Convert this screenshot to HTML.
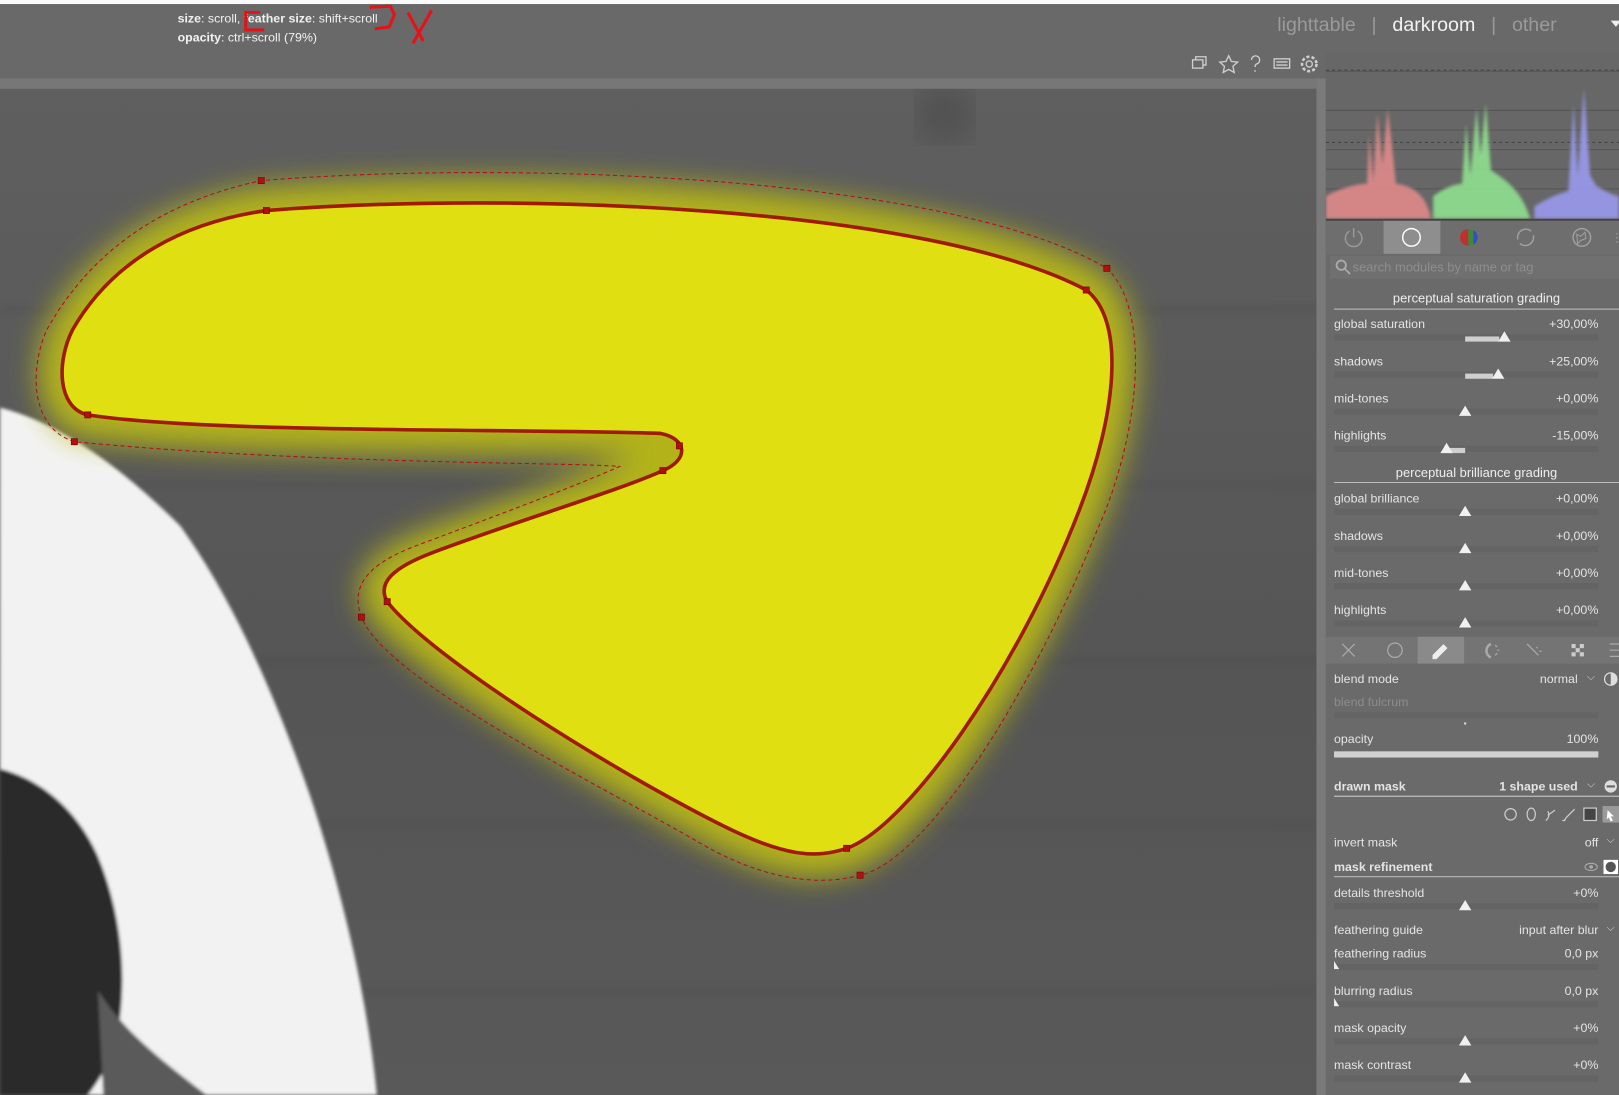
<!DOCTYPE html>
<html><head><meta charset="utf-8"><style>
html,body{margin:0;padding:0;width:1619px;height:1095px;overflow:hidden;background:#6a6a6a;}
#s{position:absolute;left:0;top:0;width:1568px;height:1061px;transform:scale(1.03253,1.03205);transform-origin:0 0;font-family:"Liberation Sans",sans-serif;color:#e2e2e2;font-size:12px;}
.a{position:absolute;}
.l{position:absolute;left:1292px;font-size:12px;color:#e4e4e4;white-space:nowrap;}
.v{position:absolute;right:20px;font-size:12px;color:#e4e4e4;white-space:nowrap;}
.tr{position:absolute;left:1292px;width:256px;height:6px;background:#646464;}
.tri{position:absolute;width:0;height:0;border-left:6px solid transparent;border-right:6px solid transparent;border-bottom:10px solid #f0f0f0;}
.fill{position:absolute;height:5px;background:#cfcfcf;}
.h{position:absolute;left:1292px;width:276px;text-align:center;font-size:12.5px;color:#eee;}
.ln{position:absolute;left:1292px;width:276px;height:1px;background:#bdbdbd;}
b{font-weight:bold}
</style></head><body><div id="s">
<div class="a" style="left:0;top:0;width:1568px;height:4px;background:#fafafa"></div>
<div class="a" style="left:0;top:4px;width:1568px;height:72px;background:#696969"></div>
<div class="a" style="left:0;top:76px;width:1275px;height:10px;background:#777"></div>
<div class="a" style="left:172px;top:9px;font-size:12px;color:#f2f2f2;line-height:18px"><b>size</b>: scroll, <b>feather size</b>: shift+scroll<br><b>opacity</b>: ctrl+scroll (79%)</div>
<svg class="a" style="left:230px;top:2px" width="200" height="44"><path d="M22 10 L8 10 L8 27 L26 27 M128 5 L148 4 L152 12 L147 24 L133 26 M165 10 L180 38 M188 8 L170 40" stroke="#e4131a" stroke-width="3" fill="none"/></svg>
<div class="a" style="left:1237px;top:14px;font-size:19px;color:#9a9a9a;white-space:nowrap">lighttable <span style="margin:0 10px">|</span> <span style="color:#f2f2f2">darkroom</span> <span style="margin:0 10px">|</span> other</div>
<div class="a" style="left:1560px;top:20px;border-left:5px solid transparent;border-right:5px solid transparent;border-top:6px solid #eee"></div>
<svg class="a" style="left:1150px;top:52px" width="130" height="20" fill="none" stroke="#cfcfcf" stroke-width="1.3">
<rect x="5" y="6" width="10" height="8"/><path d="M8 6V3h10v8h-3"/>
<path d="M40 2l2.6 5.5 6 .7-4.5 4 1.2 6-5.3-3-5.3 3 1.2-6-4.5-4 6-.7z"/>
<path d="M62 6a4 4 0 1 1 5 4c-1 .5-1.5 1-1.5 3M65.5 16v1.5"/>
<rect x="84" y="5" width="15" height="9"/><path d="M86 8h11M86 11h11"/>
<circle cx="118" cy="10" r="3"/><circle cx="118" cy="10" r="7" stroke-dasharray="3 2" stroke-width="2.5"/>
</svg>
<svg class="a" style="left:0;top:86px" width="1275" height="975" viewBox="0 86 1275 975">
<defs>
<linearGradient id="bg" x1="0" y1="0" x2="0" y2="1">
<stop offset="0" stop-color="#5f5f5f"/><stop offset=".3" stop-color="#5a5a5a"/><stop offset=".6" stop-color="#555"/><stop offset="1" stop-color="#595959"/></linearGradient>
<filter id="bl"><feGaussianBlur stdDeviation="14"/></filter>
<filter id="b2"><feGaussianBlur stdDeviation="3"/></filter>
<filter id="b3"><feGaussianBlur stdDeviation="1.5"/></filter>
</defs>
<rect x="0" y="86" width="1275" height="975" fill="url(#bg)"/>
<g opacity=".2" stroke="#444" stroke-width="6" filter="url(#b2)">
<path d="M0 300H1275M0 470H1275M0 640H1275M0 800H1275M0 960H1275"/></g>
<rect x="890" y="86" width="50" height="50" fill="#4a4a4a" filter="url(#bl)" opacity=".6"/>
<g filter="url(#b3)">
<path d="M0 395 C60 410 120 455 175 510 C225 580 265 670 300 770 C330 860 355 960 365 1061 L0 1061Z" fill="#f2f2f2"/>
<path d="M0 745 C40 755 75 785 95 830 C120 890 125 960 110 1020 C100 1040 90 1055 85 1061 L0 1061Z" fill="#2c2c2c"/>
<path d="M95 960 C120 1000 160 1030 200 1061 L100 1061Z" fill="#5a5a5a"/>
</g>
<path d="M85 402 C55 395 55 350 70 320 C110 250 180 215 258 204 C500 185 900 200 1052 281 C1090 310 1082 400 1045 495 C985 650 880 800 820 822 C790 832 760 830 700 800 C600 750 420 640 375 583 C365 565 380 550 420 535 C500 505 600 475 642 456 C668 445 665 425 640 420 C500 415 200 420 85 402Z" fill="#c8c80a" stroke="#b8b818" stroke-width="46" stroke-linejoin="round" filter="url(#bl)" opacity=".95"/>
<path d="M85 402 C55 395 55 350 70 320 C110 250 180 215 258 204 C500 185 900 200 1052 281 C1090 310 1082 400 1045 495 C985 650 880 800 820 822 C790 832 760 830 700 800 C600 750 420 640 375 583 C365 565 380 550 420 535 C500 505 600 475 642 456 C668 445 665 425 640 420 C500 415 200 420 85 402Z" fill="#e0df12" stroke="#a01a08" stroke-width="3.5"/>
<path d="M72 428 C30 415 28 360 45 320 C90 240 160 195 253 175 C500 155 920 170 1072 260 C1115 300 1105 420 1062 515 C995 680 895 835 833 848 C790 860 735 850 680 818 C580 760 375 660 350 598 C338 565 360 545 405 528 C480 500 560 470 600 452 C560 448 300 450 72 428Z" fill="none" stroke="#b01010" stroke-width="1" stroke-dasharray="4 3"/>
<g fill="#b01010" stroke="#700" stroke-width=".6">
<rect x="82" y="399" width="6" height="6"/><rect x="255" y="201" width="6" height="6"/><rect x="1049" y="278" width="6" height="6"/><rect x="817" y="819" width="6" height="6"/><rect x="372" y="580" width="6" height="6"/><rect x="639" y="453" width="6" height="6"/><rect x="655" y="429" width="6" height="6"/>
<rect x="69" y="425" width="6" height="6"/><rect x="250" y="172" width="6" height="6"/><rect x="1069" y="257" width="6" height="6"/><rect x="830" y="845" width="6" height="6"/><rect x="347" y="595" width="6" height="6"/>
</g>
</svg>
<div class="a" style="left:1275px;top:76px;width:9px;height:985px;background:#7a7a7a"></div>
<svg class="a" style="left:1284px;top:50px" width="284" height="164">
<rect width="284" height="164" fill="#676767"/>
<g stroke="#555" stroke-width="1"><path d="M0 19H284M0 57H284M0 76H284M0 95H284M0 114H284M0 133H284" /></g>
<g stroke="#444" stroke-dasharray="3 3"><path d="M0 18H284M0 88H284"/></g>
<defs><filter id="hb"><feGaussianBlur stdDeviation="1.5"/></filter></defs>
<g filter="url(#hb)" opacity=".9">
<path d="M0 162 L0 140 C15 132 30 128 40 128 L42 80 L46 126 L50 60 L55 110 L60 55 L65 100 L68 128 C85 130 98 140 102 162Z" fill="#e08a8a"/>
<path d="M104 162 L104 140 C115 132 125 128 132 128 L136 70 L140 120 L146 55 L150 100 L155 50 L160 115 C175 125 190 135 198 162Z" fill="#8fe08f"/>
<path d="M202 162 L202 150 C215 142 225 138 235 135 L240 50 L244 120 L250 35 L256 120 L262 130 C270 135 280 140 284 140 L284 162Z" fill="#9a9aee"/>
</g>
<rect y="162" width="284" height="2" fill="#444"/>
</svg>
<div class="a" style="left:1284px;top:214px;width:284px;height:32px;background:#6e6e6e"></div>
<div class="a" style="left:1340px;top:214px;width:55px;height:32px;background:#8e8e8e"></div>
<svg class="a" style="left:1284px;top:214px" width="284" height="32" fill="none" stroke-width="1.4">
<path d="M23 10a8 8 0 1 0 8 0M27 7v9" stroke="#9a9a9a"/>
<circle cx="83" cy="16" r="8.5" stroke="#fff"/>
<circle cx="138" cy="16" r="8" fill="#3a8a3a" stroke="none"/><path d="M130 16a8 8 0 0 0 8 8V8a8 8 0 0 0-8 8z" fill="#c03030"/><path d="M143 9a8 8 0 0 1 0 14z" fill="#3050c0"/>
<path d="M186 18a8 8 0 0 1 13-8M201 14a8 8 0 0 1-13 8" stroke="#a0a0a0"/>
<circle cx="248" cy="16" r="8.5" stroke="#a0a0a0"/><path d="M243 13l4 2 4-4 1 6-5 2-3 3z" stroke="#a0a0a0" stroke-width="1"/>
<path d="M282 12v1M282 16v1M282 20v1" stroke="#aaa"/>
</svg>
<div class="a" style="left:1288px;top:248px;width:280px;height:22px;background:#707070"></div>
<svg class="a" style="left:1293px;top:251px" width="16" height="16" fill="none" stroke="#aaa" stroke-width="1.8"><circle cx="6" cy="6" r="4.5"/><path d="M9.5 9.5l5 5"/></svg>
<div class="a" style="left:1310px;top:252px;font-size:12.5px;color:#8e8e8e">search modules by name or tag</div>
<div class="h" style="top:282px">perceptual saturation grading</div><div class="ln" style="top:299px"></div>
<div class="l" style="top:307px">global saturation</div><div class="v" style="top:307px">+30,00%</div>
<div class="tr" style="top:324px"></div><div class="fill" style="left:1419px;width:33px;top:326px"></div><div class="tri" style="left:1451px;top:321px"></div>
<div class="l" style="top:343px">shadows</div><div class="v" style="top:343px">+25,00%</div>
<div class="tr" style="top:360px"></div><div class="fill" style="left:1419px;width:27px;top:362px"></div><div class="tri" style="left:1445px;top:357px"></div>
<div class="l" style="top:379px">mid-tones</div><div class="v" style="top:379px">+0,00%</div>
<div class="tr" style="top:396px"></div><div class="tri" style="left:1413px;top:393px"></div>
<div class="l" style="top:415px">highlights</div><div class="v" style="top:415px">-15,00%</div>
<div class="tr" style="top:432px"></div><div class="fill" style="left:1402px;width:17px;top:434px"></div><div class="tri" style="left:1395px;top:429px"></div>
<div class="h" style="top:451px">perceptual brilliance grading</div><div class="ln" style="top:467px"></div>
<div class="l" style="top:476px">global brilliance</div><div class="v" style="top:476px">+0,00%</div><div class="tr" style="top:493px"></div><div class="tri" style="left:1413px;top:490px"></div>
<div class="l" style="top:512px">shadows</div><div class="v" style="top:512px">+0,00%</div><div class="tr" style="top:529px"></div><div class="tri" style="left:1413px;top:526px"></div>
<div class="l" style="top:548px">mid-tones</div><div class="v" style="top:548px">+0,00%</div><div class="tr" style="top:565px"></div><div class="tri" style="left:1413px;top:562px"></div>
<div class="l" style="top:584px">highlights</div><div class="v" style="top:584px">+0,00%</div><div class="tr" style="top:601px"></div><div class="tri" style="left:1413px;top:598px"></div>
<div class="a" style="left:1284px;top:617px;width:284px;height:26px;background:#747474"></div>
<div class="a" style="left:1373px;top:617px;width:45px;height:26px;background:#8a8a8a"></div>
<svg class="a" style="left:1284px;top:617px" width="284" height="26" fill="none" stroke="#aaa" stroke-width="1.2">
<path d="M16 7l12 12M28 7L16 19"/><circle cx="67" cy="13" r="7"/>
<path d="M104 18l10-10 3 3-10 10h-3z" fill="#eee" stroke="#eee"/>
<path d="M160 7a7 7 0 0 0 0 13" stroke-width="2.5"/><path d="M164 8l2 2M166 13h2M164 18l2-2"/>
<path d="M195 7l10 10M204 10l1 1M207 14h2M205 18l1-1"/>
<g fill="#ccc" stroke="none"><rect x="238" y="7" width="4" height="4"/><rect x="246" y="7" width="4" height="4"/><rect x="242" y="11" width="4" height="4"/><rect x="238" y="15" width="4" height="4"/><rect x="246" y="15" width="4" height="4"/></g>
<path d="M275 7h9M275 13h9M275 19h9"/></svg>
<div class="l" style="top:651px">blend mode</div><div class="v" style="top:651px;right:40px">normal</div>
<div class="a" style="left:1537px;top:651px;font-size:10px;color:#ccc">⌵</div>
<svg class="a" style="left:1553px;top:651px" width="14" height="14"><circle cx="7" cy="7" r="6" fill="none" stroke="#ddd" stroke-width="1.2"/><path d="M7 1a6 6 0 0 1 0 12z" fill="#ddd"/></svg>
<div class="l" style="top:673px;color:#8c8c8c">blend fulcrum</div><div class="tr" style="top:690px;background:#656565"></div>
<div class="a" style="left:1418px;top:700px;width:2px;height:2px;background:#ddd"></div>
<div class="l" style="top:709px">opacity</div><div class="v" style="top:709px">100%</div>
<div class="a" style="left:1292px;top:728px;width:256px;height:6px;background:#d0d0d0"></div>
<div class="l" style="top:755px;font-weight:bold">drawn mask</div><div class="v" style="top:755px;right:40px;font-weight:bold">1 shape used</div>
<div class="a" style="left:1537px;top:755px;font-size:10px;color:#ccc">⌵</div>
<svg class="a" style="left:1553px;top:755px" width="14" height="14"><circle cx="7" cy="7" r="6" fill="#ddd"/><path d="M3 7h8" stroke="#666" stroke-width="2"/></svg>
<div class="ln" style="top:771px;background:#cfcfcf"></div>
<svg class="a" style="left:1452px;top:780px" width="116" height="18" fill="none" stroke="#ccc" stroke-width="1.2">
<circle cx="11" cy="9" r="5.5"/><ellipse cx="31" cy="9" rx="4" ry="6"/><path d="M45 15c3-2 4-6 2-9M47 10l7-5"/><path d="M63 15l2-3 8-8M61 15h3"/>
<rect x="82" y="3" width="12" height="12" fill="#444"/><rect x="100" y="1" width="16" height="16" fill="#9a9a9a" stroke="none"/><path d="M105 5l6 6-3 0 2 4-2 1-2-4-2 2z" fill="#fff" stroke="none"/></svg>
<div class="l" style="top:809px">invert mask</div><div class="v" style="top:809px;right:20px">off</div>
<div class="a" style="left:1556px;top:809px;font-size:10px;color:#ccc">⌵</div>
<div class="l" style="top:833px;font-weight:bold">mask refinement</div>
<svg class="a" style="left:1532px;top:833px" width="36" height="14"><ellipse cx="9" cy="7" rx="6" ry="3.5" fill="none" stroke="#aaa"/><circle cx="9" cy="7" r="1.8" fill="#aaa"/><rect x="21" y="0" width="14" height="14" fill="#fff"/><circle cx="28" cy="7" r="5" fill="#555"/></svg>
<div class="ln" style="top:849px"></div>
<div class="l" style="top:858px">details threshold</div><div class="v" style="top:858px">+0%</div><div class="tr" style="top:875px"></div><div class="tri" style="left:1413px;top:872px"></div>
<div class="l" style="top:894px">feathering guide</div><div class="v" style="top:894px">input after blur</div><div class="a" style="left:1556px;top:894px;font-size:10px;color:#ccc">⌵</div>
<div class="l" style="top:917px">feathering radius</div><div class="v" style="top:917px">0,0 px</div><div class="tr" style="top:934px"></div><div class="a" style="left:1292px;top:931px;border-left:5px solid #eee;border-top:8px solid transparent"></div>
<div class="l" style="top:953px">blurring radius</div><div class="v" style="top:953px">0,0 px</div><div class="tr" style="top:970px"></div><div class="a" style="left:1292px;top:967px;border-left:5px solid #eee;border-top:8px solid transparent"></div>
<div class="l" style="top:989px">mask opacity</div><div class="v" style="top:989px">+0%</div><div class="tr" style="top:1006px"></div><div class="tri" style="left:1413px;top:1003px"></div>
<div class="l" style="top:1025px">mask contrast</div><div class="v" style="top:1025px">+0%</div><div class="tr" style="top:1042px"></div><div class="tri" style="left:1413px;top:1039px"></div>
</div></body></html>
